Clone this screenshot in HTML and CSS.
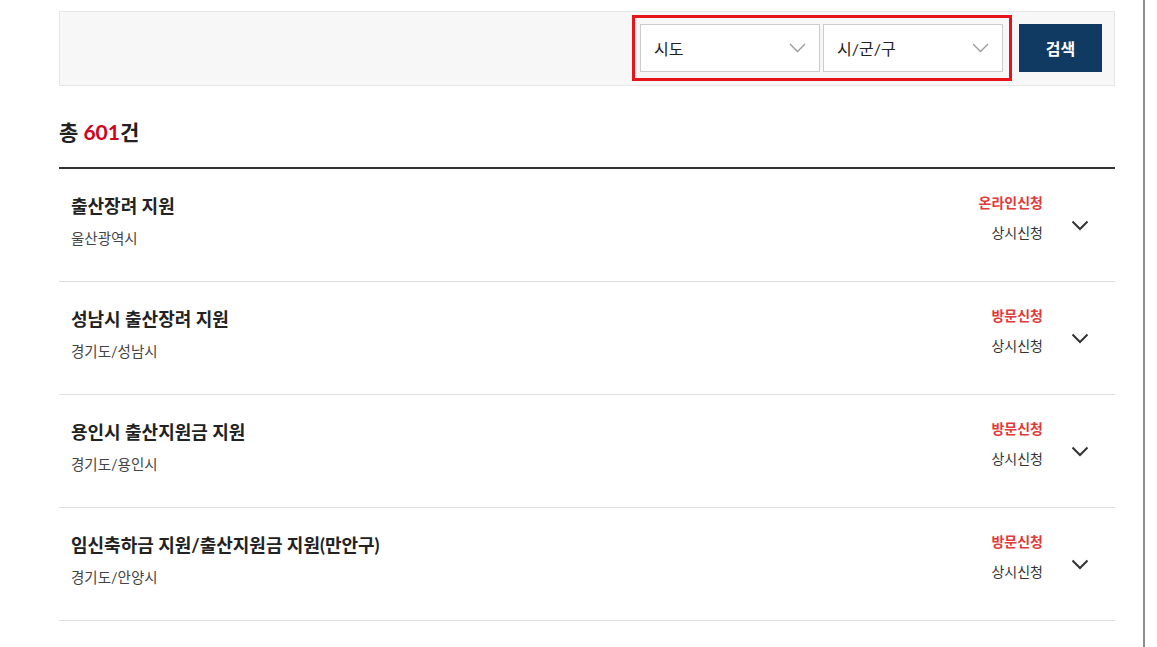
FILE: index.html
```html
<html>
<head>
    <title>지원 검색</title>
    <link rel="stylesheet" href="styles.css">
</head>
<body>

    <div class="page">
        <div id="content">
            <form action="javascript:;" class="searchBox">
                <div class="selectGroup">
                    <div class="select">
                        <span>시도</span>
                        <svg width="17" height="10" viewBox="0 0 17 10"><path d="M1 1l7.5 7.5L16 1" fill="none" stroke="#999" stroke-width="1.3"/></svg>
                    </div>
                    <div class="select">
                        <span>시/군/구</span>
                        <svg width="17" height="10" viewBox="0 0 17 10"><path d="M1 1l7.5 7.5L16 1" fill="none" stroke="#999" stroke-width="1.3"/></svg>
                    </div>
                </div>
                <button type="button" class="searchBtn">검색</button>
            </form>

            <div class="total">총 <em>601</em>건</div>

            <ul class="list">
                <li>
                    <div class="info">
                        <div class="title">출산장려 지원</div>
                        <div class="area">울산광역시</div>
                    </div>
                    <div class="status">
                        <div class="type">온라인신청</div>
                        <div class="period">상시신청</div>
                    </div>
                    <div class="toggle"><svg width="18" height="11" viewBox="0 0 18 11"><path d="M1.5 1.5l7.5 7.5 7.5-7.5" fill="none" stroke="#333" stroke-width="2"/></svg></div>
                </li>
                <li>
                    <div class="info">
                        <div class="title">성남시 출산장려 지원</div>
                        <div class="area">경기도/성남시</div>
                    </div>
                    <div class="status">
                        <div class="type">방문신청</div>
                        <div class="period">상시신청</div>
                    </div>
                    <div class="toggle"><svg width="18" height="11" viewBox="0 0 18 11"><path d="M1.5 1.5l7.5 7.5 7.5-7.5" fill="none" stroke="#333" stroke-width="2"/></svg></div>
                </li>
                <li>
                    <div class="info">
                        <div class="title">용인시 출산지원금 지원</div>
                        <div class="area">경기도/용인시</div>
                    </div>
                    <div class="status">
                        <div class="type">방문신청</div>
                        <div class="period">상시신청</div>
                    </div>
                    <div class="toggle"><svg width="18" height="11" viewBox="0 0 18 11"><path d="M1.5 1.5l7.5 7.5 7.5-7.5" fill="none" stroke="#333" stroke-width="2"/></svg></div>
                </li>
                <li>
                    <div class="info">
                        <div class="title">임신축하금 지원/출산지원금 지원(만안구)</div>
                        <div class="area">경기도/안양시</div>
                    </div>
                    <div class="status">
                        <div class="type">방문신청</div>
                        <div class="period">상시신청</div>
                    </div>
                    <div class="toggle"><svg width="18" height="11" viewBox="0 0 18 11"><path d="M1.5 1.5l7.5 7.5 7.5-7.5" fill="none" stroke="#333" stroke-width="2"/></svg></div>
                </li>
            </ul>
        </div>
    </div>

</body>
</html>
```

FILE: styles.css
```css
* {font-family: Lato, "Noto Sans CJK KR", sans-serif; box-sizing: border-box;}
body {margin: 0; background: #fff; color: #222;}
.page {width: 1145px; height: 100vh; border-right: 2px solid #8c8c8c; padding: 11px 0 0 59px; overflow: hidden;}
#content {width: 1056px;}

.searchBox {
    align-items: center;
    background: #f7f7f8;
    border: 1px solid #e6e6e6;
    display: flex;
    height: 75px;
    justify-content: flex-end;
    margin: 0;
    padding: 0 12px 1px 0;
}
.selectGroup {
    border: 3px solid #e8141c;
    display: flex;
    gap: 3px;
    padding: 6px 6px 6px 5px;
}
.select {
    align-items: center;
    background: #fff;
    border: 1px solid #ccc;
    display: flex;
    font-size: 16px;
    height: 48px;
    justify-content: space-between;
    padding: 0 13px 0 13px;
    width: 180px;
}
.select span {color: #222;}
.searchBtn {
    background: #113a62;
    border: 0;
    color: #fff;
    font-size: 16px;
    font-weight: bold;
    height: 48px;
    margin-left: 7px;
    width: 83px;
}

.total {font-size: 21px; font-weight: bold; color: #222; margin: 33px 0 0; line-height: 26px;}
.total em {color: #d0021b; font-style: normal;}

.list {border-top: 2px solid #333; list-style: none; margin: 22px 0 0; padding: 0;}
.list li {
    align-items: center;
    border-bottom: 1px solid #ddd;
    display: flex;
    height: 113px;
    padding: 0 0 9px 12px;
}
.list .info {flex: 1;}
.list .title {font-size: 18px; font-weight: bold; line-height: 26px; color: #222;}
.list .area {font-size: 14.5px; line-height: 20px; color: #444; margin-top: 10px;}
.list .status {text-align: right; font-size: 14px; line-height: 20px; margin-bottom: 6px;}
.list .type {color: #e03a3a; font-weight: bold;}
.list .period {color: #333; margin-top: 10px;}
.list .toggle {display: flex; justify-content: center; width: 72px; padding: 10px 0 0 2px;}
```
